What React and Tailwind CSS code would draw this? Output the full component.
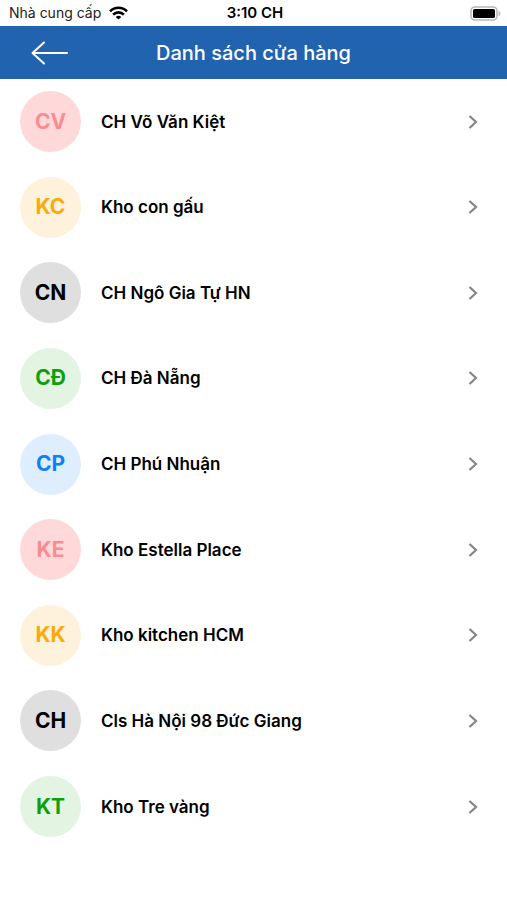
import React from 'react';
import clsx from 'clsx';

const TONES = {
    pink: 'bg-[#ffd9da] text-[#f78d90]',
    amber: 'bg-[#fff2dc] text-[#f8ab0c]',
    gray: 'bg-[#dfdfdf] text-black',
    green: 'bg-[#e3f4e3] text-[#109f0c]',
    blue: 'bg-[#dfeeff] text-[#0d80fa]',
};

const STORES = [
    { initials: 'CV', name: 'CH Võ Văn Kiệt', tone: 'pink' },
    { initials: 'KC', name: 'Kho con gấu', tone: 'amber' },
    { initials: 'CN', name: 'CH Ngô Gia Tự HN', tone: 'gray' },
    { initials: 'CĐ', name: 'CH Đà Nẵng', tone: 'green' },
    { initials: 'CP', name: 'CH Phú Nhuận', tone: 'blue' },
    { initials: 'KE', name: 'Kho Estella Place', tone: 'pink' },
    { initials: 'KK', name: 'Kho kitchen HCM', tone: 'amber' },
    { initials: 'CH', name: 'Cls Hà Nội 98 Đức Giang', tone: 'gray' },
    { initials: 'KT', name: 'Kho Tre vàng', tone: 'green' },
];

const WifiIcon = () => (
    <svg width="19" height="14" viewBox="0 0 19 14" fill="none" stroke="black" strokeWidth="2.6">
        <path d="M1 5.4C5.8.6 13.2.6 18 5.4" />
        <path d="M4.1 8.6c3.1-3 7.7-3 10.8 0" />
        <path d="M6.7 10.9c1.7-1.5 3.9-1.5 5.6 0L9.5 13.6z" fill="black" stroke="none" />
    </svg>
);

const BatteryIcon = () => (
    <svg width="31" height="15" viewBox="0 0 31 15">
        <rect x="1" y="1" width="26" height="13" rx="4" fill="white" stroke="#b9b9b9" strokeWidth="1.6" />
        <rect x="3" y="3" width="22" height="9" rx="1.6" fill="black" />
        <path d="M28.5 5c2.6.6 2.6 4.4 0 5z" fill="#b9b9b9" />
    </svg>
);

const StatusBar = () => (
    <div className="grid grid-cols-3 items-center h-[26px] pl-[9px] pr-[6px] text-black">
        <div className="flex items-center gap-2 whitespace-nowrap text-sm text-[#222222]">
            <span>Nhà cung cấp</span>
            <WifiIcon />
        </div>
        <span className="text-center text-[15px] leading-6 font-semibold">3:10 CH</span>
        <div className="flex justify-end">
            <BatteryIcon />
        </div>
    </div>
);

const Header = () => (
    <header className="grid grid-cols-[auto_1fr_auto] items-center h-[53px] px-[30px] bg-[#2163ae] text-white">
        <button type="button" aria-label="Quay lại" className="w-10">
            <svg width="40" height="26" viewBox="0 0 40 26" fill="none" stroke="currentColor" strokeWidth="2" strokeLinecap="round" strokeLinejoin="round">
                <path d="M37 13H2.5M14 2.5 2.5 13 14 23.5" />
            </svg>
        </button>
        <h1 className="text-center text-xl font-medium">Danh sách cửa hàng</h1>
        <span className="w-10" />
    </header>
);

const StoreRow = ({ store }) => (
    <li>
        <button type="button" className="flex items-center w-full pl-5 pr-7 text-left">
            <span className={clsx('flex items-center justify-center size-[61px] rounded-full text-[21px] leading-7 font-bold', TONES[store.tone])}>
                {store.initials}
            </span>
            <span className="flex-1 ml-5 text-[17px] leading-6 font-semibold text-black">{store.name}</span>
            <svg width="12" height="16" viewBox="0 0 12 16" fill="none" stroke="#858585" strokeWidth="2.2">
                <path d="M2.5 2 9 8l-6.5 6" />
            </svg>
        </button>
    </li>
);

const App = () => {
    return (
        <div className="flex flex-col min-h-screen bg-white font-[Inter,'Liberation_Sans',sans-serif]">
            <StatusBar />
            <Header />
            <ul className="flex flex-col flex-1 justify-between gap-4 pt-3 pb-[63px]">
                {STORES.map((store) => (
                    <StoreRow key={store.initials} store={store} />
                ))}
            </ul>
        </div>
    );
};

export default App;
